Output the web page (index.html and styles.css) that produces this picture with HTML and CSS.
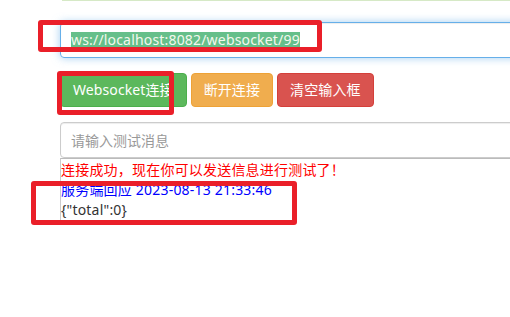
FILE: index.html
```html
<!DOCTYPE html>
<html lang="zh-CN">
<head>
<meta charset="utf-8">
<title>Websocket</title>
<link rel="stylesheet" href="styles.css">
</head>
<body>
<div class="alert-edge"></div>
<div class="page">
  <div class="url-input"><span class="sel">ws://localhost:8082/websocket/99</span></div>
  <div class="btns">
    <button class="btn btn-green">Websocket连接</button>
    <button class="btn btn-orange">断开连接</button>
    <button class="btn btn-red">清空输入框</button>
  </div>
  <input class="msg-input" type="text" placeholder="请输入测试消息">
  <div class="log">
    <div class="line red">连接成功，现在你可以发送信息进行测试了！</div>
    <div class="line blue">服务端回应 2023-08-13 21:33:46</div>
    <div class="line">{"total":0}</div>
  </div>
</div>
<div class="mark mark-1"></div>
<div class="mark mark-2"></div>
<div class="mark mark-3"></div>
</body>
</html>
```
FILE: styles.css
```css
html, body {
  margin: 0;
  padding: 0;
  background: #fff;
  overflow: hidden;
  width: 510px;
  height: 317px;
}
body {
  position: relative;
  font-family: "Noto Sans", "Noto Sans CJK SC", sans-serif;
  font-size: 14px;
  color: #333;
}
.alert-edge {
  margin-left: 62px;
  width: 448px;
  height: 1px;
  background: #d6e9c6;
}
.page {
  padding-left: 60px;
  padding-top: 21px;
  width: 450px;
  overflow: hidden;
}
.url-input {
  box-sizing: border-box;
  width: 600px;
  height: 36px;
  border: 1px solid #66afe9;
  border-radius: 4px;
  box-shadow: inset 0 1px 1px rgba(0,0,0,.075), 0 0 8px rgba(102,175,233,.6);
  padding: 0 10px;
  display: flex;
  align-items: center;
}
.sel {
  background: #66bf8a;
  color: #f4f8ee;
  line-height: 16px;
  letter-spacing: 0.18px;
}
.btns {
  display: flex;
  gap: 4px;
  margin-top: 15px;
}
.btn {
  font-family: inherit;
  font-size: 14px;
  height: 34px;
  padding: 0 12px;
  border: 1px solid transparent;
  border-radius: 4px;
  color: #fff;
  line-height: 32px;
  letter-spacing: 0.1px;
  cursor: pointer;
}
.btn-green { background: #5cb85c; border-color: #4cae4c; }
.btn-orange { background: #f0ad4e; border-color: #eea236; }
.btn-red { background: #d9534f; border-color: #d43f3a; }
.msg-input {
  display: block;
  box-sizing: border-box;
  width: 600px;
  height: 36px;
  margin: 15px 0 0;
  padding: 0 10px;
  border: 1px solid #ccc;
  border-radius: 4px;
  box-shadow: inset 0 1px 1px rgba(0,0,0,.075);
  font-family: inherit;
  font-size: 14px;
  color: #555;
}
.msg-input::placeholder { color: #999; }
.log {
  width: 600px;
  border-left: 1px solid #ccc;
  border-top: 1px solid #bbb;
  height: 63px;
  padding: 1px 0 0;
}
.line {
  line-height: 20px;
  white-space: nowrap;
  letter-spacing: 0.2px;
}
.red { color: #f00; }
.blue { color: #00f; }
.mark {
  position: absolute;
  box-sizing: border-box;
  border: 5px solid #ea1f29;
  border-radius: 3px;
}
.mark-1 { left: 38px; top: 20px; width: 284px; height: 32px; }
.mark-2 { left: 57px; top: 71px; width: 117px; height: 44px; }
.mark-3 { left: 31px; top: 181px; width: 266px; height: 44px; }
```
